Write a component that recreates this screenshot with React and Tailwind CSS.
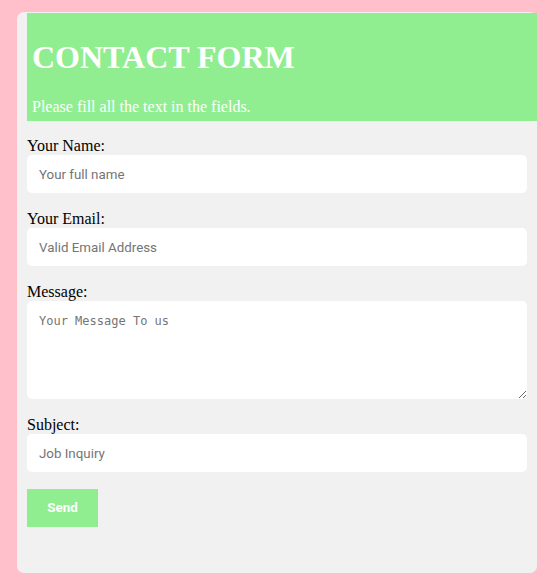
import React from 'react';

// Simple contact form card on a pink page
const serif = { fontFamily: '"Liberation Serif", "Times New Roman", serif' };

const Field = ({ label, children }) => (
  <div className="mt-[17px] first:mt-[16px]">
    <label className="block text-[16px] leading-[18px] text-black" style={serif}>
      {label}
    </label>
    {children}
  </div>
);

const inputClass =
  "block w-full h-[38px] rounded-[5px] bg-white px-3 text-[13.33px] text-black outline-none placeholder:text-[#757575] font-['Roboto',_'Liberation_Sans',_sans-serif]";

export default function App() {
  return (
    <div className="min-h-[586px] bg-[#ffc0cb] pl-[17px] pt-[12px]">
      <div className="w-[520px] h-[561px] rounded-[7px] bg-[#f1f1f1] pl-[10px] pt-px">
        {/* Header */}
        <div className="w-[510px] h-[108px] bg-[#90ee90] pl-[5px] text-white" style={serif}>
          <h1 className="pt-[26px] text-[32px] leading-[37px] font-bold">CONTACT FORM</h1>
          <p className="mt-[22px] text-[16px] leading-[18px]">Please fill all the text in the fields.</p>
        </div>

        <form className="w-[500px]" onSubmit={(e) => e.preventDefault()}>
          <Field label="Your Name:">
            <input type="text" placeholder="Your full name" className={inputClass} />
          </Field>
          <Field label="Your Email:">
            <input type="email" placeholder="Valid Email Address" className={inputClass} />
          </Field>
          <Field label="Message:">
            <textarea
              placeholder="Your Message To us"
              className="block w-full h-[98px] resize rounded-[5px] bg-white px-3 pt-[13px] text-[12px] leading-[14px] outline-none placeholder:text-[#757575] font-['DejaVu_Sans_Mono',_'Liberation_Mono',_monospace]"
            />
          </Field>
          <Field label="Subject:">
            <input type="text" placeholder="Job Inquiry" className={inputClass} />
          </Field>
          <button
            type="submit"
            className="mt-[17px] w-[71px] h-[38px] bg-[#90ee90] text-[13.33px] font-bold text-white font-['Roboto',_'Liberation_Sans',_sans-serif]"
          >
            Send
          </button>
        </form>
      </div>
    </div>
  );
}
